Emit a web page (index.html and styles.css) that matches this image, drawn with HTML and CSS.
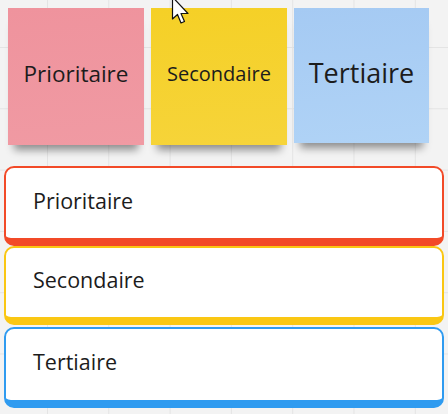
FILE: index.html
```html
<!DOCTYPE html>
<html lang="fr">
<head>
<meta charset="utf-8">
<title>Priorités</title>
<link rel="stylesheet" href="styles.css">
</head>
<body>
<div class="board">
  <div class="stickies">
    <div class="sticky pink"><span class="t-prio">Prioritaire</span></div>
    <div class="sticky yellow"><span class="t-sec">Secondaire</span></div>
    <div class="sticky blue"><span class="t-ter">Tertiaire</span></div>
  </div>
  <div class="cards">
    <div class="card red">Prioritaire</div>
    <div class="card gold">Secondaire</div>
    <div class="card sky">Tertiaire</div>
  </div>
  <svg class="cursor" width="20" height="28" viewBox="0 0 20 28">
    <path d="M1.5 -3 L1.5 19 L6.5 14.5 L10 23 L13.5 21.5 L10 13.5 L17 13.5 Z" fill="#fff" stroke="#111" stroke-width="1.2" stroke-linejoin="round"/>
  </svg>
</div>
</body>
</html>
```
FILE: styles.css
```css
html, body {
  margin: 0;
  padding: 0;
}
body {
  width: 448px;
  height: 414px;
  overflow: hidden;
  background-color: #f3f3f3;
  background-image:
    linear-gradient(to right, #e4e4e4 1px, transparent 1px),
    linear-gradient(to bottom, #e4e4e4 1px, transparent 1px);
  background-size: 61.3px 61.3px;
  background-position: 47px 47px;
  font-family: "Open Sans", "Noto Sans", sans-serif;
  color: #1c1c1c;
}
.board {
  position: relative;
  width: 448px;
  height: 414px;
}
.stickies {
  display: flex;
  gap: 7px;
  padding: 8px 0 0 8px;
}
.sticky {
  box-sizing: border-box;
  width: 136px;
  height: 137px;
  display: flex;
  align-items: center;
  justify-content: center;
  padding-bottom: 6px;
  box-shadow: 0 11px 8px -6px rgba(0,0,0,0.42);
}
.pink { background: linear-gradient(175deg, #ef939d, #f09aa3); }
.yellow { background: linear-gradient(175deg, #f5d026, #f6d43a); }
.blue { background: linear-gradient(175deg, #a5caf3, #b0d3f6); width: 135px; height: 135px; }
.t-prio { font-size: 22.5px; }
.t-sec { font-size: 20px; }
.t-ter { font-size: 27px; }
.cards {
  display: flex;
  flex-direction: column;
  margin: 21px 4px 0 4px;
}
.card {
  box-sizing: border-box;
  height: 80px;
  background: #fff;
  border: 2px solid;
  border-bottom-width: 8px;
  border-radius: 10px;
  display: flex;
  align-items: center;
  padding: 0 0 6px 27px;
  font-size: 21.5px;
}
.red { border-color: #f24a28; }
.gold { border-color: #fac713; height: 79px; }
.sky { border-color: #2f9bf0; margin-top: 2px; height: 81px; }
.cursor {
  position: absolute;
  left: 171px;
  top: 0;
}
```
